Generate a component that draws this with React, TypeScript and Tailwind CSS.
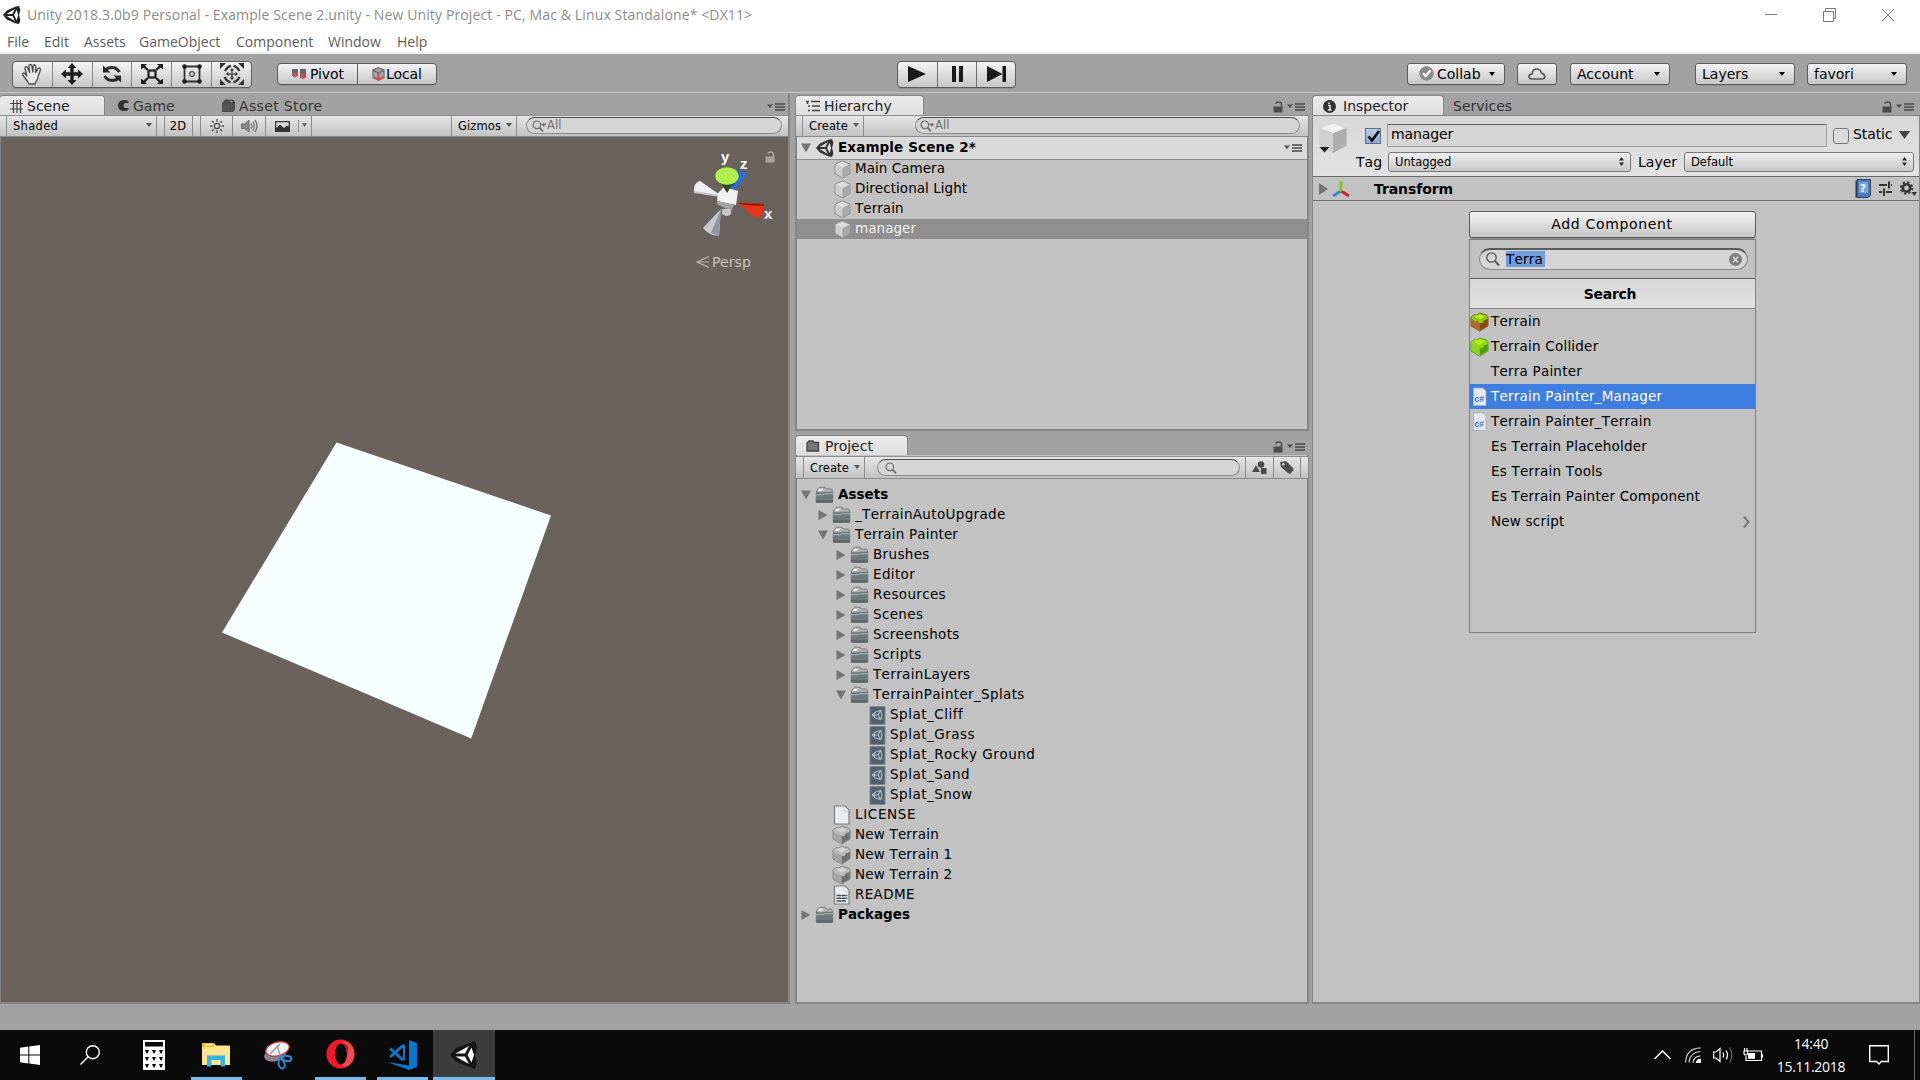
import React from "react";

type Kids = { children?: React.ReactNode };

/* ---------- small glyphs ---------- */

function Caret({ className = "text-[#555]", w = 6 }: { className?: string; w?: number }) {
  return (
    <svg width={w} height={4} viewBox="0 0 6 4" className={"shrink-0 " + className}>
      <path d="M0 0H6L3 4Z" fill="currentColor" />
    </svg>
  );
}

function UnityLogo({ size = 18, dark = "#222", light = "#fff" }: { size?: number; dark?: string; light?: string }) {
  return (
    <svg width={size} height={size} viewBox="0 0 28 28" className="shrink-0">
      <path d="M0 14 L6 7 L19 1 L25 0 L27 6 L25 14 L27 22 L25 28 L19 27 L6 21Z" fill={dark} />
      <path d="M5.5 12.300 L18.500 4.500 L14.700 12.300Z M5.500 15.700 H14.700 L18.500 23.500Z M21.300 6 L23.500 14 L21.300 22 L17.200 14Z" fill={light} />
    </svg>
  );
}

function Cube() {
  return (
    <svg width="19" height="19" viewBox="0 0 19 19" className="shrink-0">
      <path d="M9.5 1 L17 4.2 V13.5 L9.5 18 L2 13.5 V4.2Z" fill="#bdbdbd" stroke="#8d8d8d" strokeWidth="1" />
      <path d="M9.5 1.6 L16.4 4.5 L9.5 8 L2.6 4.5Z" fill="#dcdcdc" />
      <path d="M2.6 4.8 L9.5 8.2 V17.2 L2.6 13.2Z" fill="#cfcfcf" />
      <path d="M16.4 4.8 L9.5 8.2 V17.2 L16.4 13.2Z" fill="#a9a9a9" />
    </svg>
  );
}

function Block({ top, top2, left, right, edge }: { top: string; top2: string; left: string; right: string; edge: string }) {
  return (
    <svg width="19" height="20" viewBox="0 0 19 20" className="shrink-0">
      <path d="M1 5 L4.5 2.6 L6.5 3 L10 1 L13 2.2 L15 2.2 L18 4.4 V14 L9.8 19 L1 14Z" fill={left} stroke={edge} strokeWidth="1" />
      <path d="M1.5 5.3 L9.6 9.5 V18.4 L1.5 13.7Z" fill={left} />
      <path d="M17.6 5 L9.8 9.5 V18.4 L17.6 13.7Z" fill={right} />
      <path d="M1.3 5 L4.5 3 L6.5 3.6 L10 1.5 L12.6 2.9 L15 2.7 L17.7 4.8 V7 L14 8.2 L12.5 11 L9.7 11.2 L7.5 9 L5 9.4 L1.5 6.5Z" fill={top2} />
      <path d="M4 4.8 L9.8 2.2 L14.8 4.4 L9.8 7.6Z" fill={top} />
    </svg>
  );
}

const GrayBlock = () => <Block top="#d2d2d2" top2="#bababa" left="#a5a5a5" right="#6e6e6e" edge="#858585" />;

function Folder() {
  return (
    <svg width="19" height="18" viewBox="0 0 19 18" className="shrink-0">
      <path d="M1.5 5 L2.5 3.2 L3.5 2.7 L4.5 1.2 H10 L11 3 H16 Q17.3 3 17.3 5 V7 H1.5Z" fill="#b3b3b3" stroke="#7d7d7d" />
      <path d="M4 2.8 H8.6 L6 5 H3Z" fill="#f2f2f2" />
      <path d="M.8 6.5 H8 L9 5.8 H18.2 V15.5 Q18.2 16.8 17 16.8 H2 Q.8 16.8 .8 15.5Z" fill="#6d797b" />
      <path d="M1 8.7 H8 L9.5 7.8 H18" stroke="#a9b9ba" fill="none" />
      <path d="M1 14.5 H18 V15.5 Q18 16.5 17 16.5 H2 Q1 16.5 1 15.5Z" fill="#566062" />
    </svg>
  );
}

function Splat() {
  return (
    <svg width="19" height="19" viewBox="0 0 19 19" className="shrink-0">
      <rect x="3" y=".5" width="15" height="18" rx=".8" fill="#4f626b" stroke="#7f8a8f" />
      <path d="M5.500 9 L8.500 6 L13.800 4.300 L15 9 L13.800 13.700 L8.500 12Z M15 9 L13.800 4.300 M5.500 9 H11 L13.800 4.300 M11 9 L13.800 13.700" fill="none" stroke="#a9bac4" strokeWidth="1.150" strokeLinejoin="round" />
      <path d="M5 9 L8 6.500 V11.500Z" fill="#a9bac4" />
    </svg>
  );
}

function Page({ lines }: { lines?: boolean }) {
  return (
    <svg width="19" height="20" viewBox="0 0 19 20" className="shrink-0">
      <path d="M2.5 1 H13 L17 5 V19 H2.5Z" fill="#e9edf0" stroke="#7b7f82" strokeWidth="1.2" />
      <path d="M12 1.500 V6 H16.600" fill="#fff" stroke="#b4bbbf" strokeWidth=".8" />
      {lines && <path d="M4.500 10.500 H15.500 M4.500 13.300 H15.500 M4.500 16 H14" stroke="#3e4a52" strokeWidth="1.500" strokeDasharray="4.500 .4" />}
    </svg>
  );
}

function CsFile() {
  return (
    <svg width="19" height="20" viewBox="0 0 19 20" className="shrink-0">
      <path d="M3.500 1 H13 L16 4 V18.500 H3.500Z" fill="#e4e9ef" stroke="#a6adb4" strokeWidth=".8" />
      <text x="4.600" y="14.500" fontSize="8.500" fontWeight="bold" fontFamily="Liberation Sans, sans-serif" fill="#3f6fc4">c#</text>
    </svg>
  );
}

function Lock({ color = "#4c4c4c" }: { color?: string }) {
  return (
    <svg width="11" height="12" viewBox="0 0 11 12" className="shrink-0">
      <rect x=".5" y="5.5" width="9" height="6" fill={color} />
      <path d="M3 3 V2.2 Q3 1 5.5 1 Q8.5 1 8.5 3 V6" fill="none" stroke={color} strokeWidth="1.4" />
    </svg>
  );
}

function PaneMenu() {
  return (
    <svg width="18" height="8" viewBox="0 0 18 8" className="shrink-0">
      <path d="M0 1.5H6L3 5Z" fill="#4a4a4a" />
      <path d="M8 1H18M8 4H18M8 7H18" stroke="#4a4a4a" strokeWidth="1.3" />
    </svg>
  );
}

function Magnifier({ arrow }: { arrow?: boolean }) {
  return (
    <svg width={arrow ? 15 : 12} height="12" viewBox={arrow ? "0 0 15 12" : "0 0 12 12"} className="shrink-0" fill="none" stroke="#6d6d6d">
      <circle cx="4.8" cy="4.8" r="3.8" strokeWidth="1.2" />
      <path d="M7.5 7.7 L11 11.3" strokeWidth="1.7" />
      {arrow && <path d="M9 3.5H14.6L11.8 7Z" fill="#6d6d6d" stroke="none" />}
    </svg>
  );
}

/* ---------- shared chrome ---------- */

function Tab({ children, className = "" }: Kids & { className?: string }) {
  return (
    <div
      className={
        "flex h-[20px] items-center rounded-t-[4px] border border-b-0 border-[#858585] bg-linear-to-b from-[#ececec] to-[#dedede] pt-px text-[14px] text-[#222] " +
        className
      }
    >
      {children}
    </div>
  );
}

function Bar({ children, className = "" }: Kids & { className?: string }) {
  return (
    <div className={"flex h-[22px] shrink-0 items-stretch border-y border-t-[#8e8e8e] border-b-[#8a8a8a] bg-linear-to-b from-[#e6e6e6] to-[#c2c2c2] text-[11.5px] tracking-[0.1px] text-black " + className}>
      {children}
    </div>
  );
}

const Sep = ({ className = "" }: { className?: string }) => <div className={"w-px shrink-0 bg-[#8c8c8c] " + className} />;

function SearchBox({ children, className = "" }: Kids & { className?: string }) {
  return (
    <div className={"flex h-[17px] items-center rounded-full border border-[#8a8a8a] border-t-[#4d4d4d] bg-[#d5d5d5] text-[11.5px] text-[#707070] " + className}>
      {children}
    </div>
  );
}

const btn = "flex items-center border border-[#5c5c5c] bg-linear-to-b from-[#f4f4f4] to-[#c6c6c6] text-[14px] text-black shadow-[0_1px_0_#8f8f8f] ";

/* ---------- title + menu ---------- */

const menus = [
  ["File", "w-[37px]"],
  ["Edit", "w-[40px]"],
  ["Assets", "w-[55px]"],
  ["GameObject", "w-[97px]"],
  ["Component", "w-[92px]"],
  ["Window", "w-[69px]"],
  ["Help", "w-[60px]"],
];

function TitleBar() {
  return (
    <header className="h-[54px] shrink-0 border-b-2 border-[#efefef] bg-white font-['Open_Sans',sans-serif]">
      <div className="flex h-[29px] items-center pl-[3px]">
        <UnityLogo size={18} />
        <span className="ml-[6px] text-[14px] tracking-[0.125px] text-[#8c8c8c]">
          Unity 2018.3.0b9 Personal - Example Scene 2.unity - New Unity Project - PC, Mac &amp; Linux Standalone* &lt;DX11&gt;
        </span>
        <svg width="132" height="14" viewBox="0 0 132 14" className="mr-[24px] ml-auto" fill="none" stroke="#7c7c7c">
          <path d="M1 6.5H13" />
          <path d="M59.5 3.5H69.5V13.5H59.5ZM61.5 3.5V.5H71.5V10.5H69.5" />
          <path d="M118 1L130 13M130 1L118 13" />
        </svg>
      </div>
      <nav className="flex h-[25px] items-center pl-[7px] text-[14px] text-[#5c5c5c]">
        {menus.map(([m, w]) => (
          <span key={m} className={w + " shrink-0"}>{m}</span>
        ))}
      </nav>
    </header>
  );
}

/* ---------- main toolbar ---------- */

const toolIcons = [
  <svg key="hand" width="24" height="24" viewBox="0 0 24 24" fill="#e8e8e8" stroke="#4a4a4a" strokeWidth="1.3" strokeLinejoin="round">
    <path d="M8 20 L3 13.5 Q2 11.5 3.5 11 Q5 10.8 7 14 L5 7 Q4.6 5 6 4.6 Q7.2 4.5 7.8 6.2 L9.6 10.5 L8.8 4 Q8.8 2.4 10.2 2.3 Q11.5 2.3 11.8 4 L12.8 10 L13.2 4 Q13.6 2.6 14.8 2.8 Q16 3.2 15.8 4.8 L15.8 10.5 L18 6.6 Q18.9 5.6 20 6.2 Q21 7 20.3 8.3 L18.6 13 Q17.8 17.5 16 19.5 L15 22 H9Z" />
  </svg>,
  <svg key="move" width="22" height="22" viewBox="0 0 22 22" fill="#1d1d1d">
    <path d="M11 0 L15.5 5 H12.7 V9.3 H17 V6.5 L22 11 L17 15.5 V12.7 H12.7 V17 H15.5 L11 22 L6.5 17 H9.3 V12.7 H5 V15.5 L0 11 L5 6.5 V9.3 H9.3 V5 H6.5Z" />
  </svg>,
  <svg key="rot" width="20" height="20" viewBox="0 0 20 20">
    <path d="M3.500 5.500 Q6 3.500 10 3.500 Q14.500 3.500 17.500 8 M16.500 14.500 Q14 16.500 10 16.500 Q5.500 16.500 2.500 12" fill="none" stroke="#2a2a2a" strokeWidth="3" />
    <path d="M1 1.500 V8.500 H8.500Z M19 18.500 V11.500 H11.500Z" fill="#2a2a2a" />
  </svg>,
  <svg key="scale" width="22" height="20" viewBox="0 0 22 20">
    <rect x="7.5" y="6.5" width="7" height="7" fill="none" stroke="#1d1d1d" strokeWidth="2.2" />
    <path d="M0 0H6L4.2 1.8L7.5 5.2L5.8 6.4L2.4 3.6L0 5.5ZM22 0H16L17.8 1.8L14.5 5.2L16.2 6.4L19.6 3.6L22 5.5ZM0 20H6L4.2 18.2L7.5 14.8L5.8 13.6L2.4 16.4L0 14.5ZM22 20H16L17.8 18.2L14.5 14.8L16.2 13.6L19.6 16.4L22 14.5Z" fill="#1d1d1d" />
  </svg>,
  <svg key="rect" width="20" height="20" viewBox="0 0 20 20">
    <path d="M2.5 2.5H17.5V17.5H2.5Z" fill="none" stroke="#333" strokeWidth="1.8" />
    <g fill="#1d1d1d"><circle cx="2.5" cy="2.5" r="2.3" /><circle cx="17.5" cy="2.5" r="2.3" /><circle cx="2.5" cy="17.5" r="2.3" /><circle cx="17.5" cy="17.5" r="2.3" /></g>
    <circle cx="10" cy="10" r="2.3" fill="none" stroke="#444" strokeWidth="1.2" />
  </svg>,
  <svg key="all" width="24" height="22" viewBox="0 0 24 22">
    <path d="M5 8 Q7 4 11 2.8 M13.5 2.8 Q17.5 4 19.5 8 M19.5 14 Q17.5 18 13.5 19.4 M10.5 19.4 Q6.5 18 4.5 14" fill="none" stroke="#333" strokeWidth="2.2" />
    <path d="M0 0H6L0 6Z M24 0H18L24 6Z M0 22H6L0 16Z M24 22H18L24 16Z" fill="#333" />
    <path d="M12 5 L14.3 7.6 H12.6 V10.4 H15.4 V8.7 L18 11 L15.4 13.3 V11.6 H12.6 V14.4 H14.3 L12 17 L9.7 14.4 H11.4 V11.6 H8.6 V13.3 L6 11 L8.6 8.7 V10.4 H11.4 V7.6 H9.7Z" fill="#333" />
  </svg>,
];

function DropBtn({ label, className }: { label: string; className: string }) {
  return (
    <div className={btn + "h-[22px] justify-between rounded-[3px] pr-[9px] pl-[6px] " + className}>
      <span>{label}</span>
      <Caret className="text-black" w={6} />
    </div>
  );
}

function MainToolbar() {
  return (
    <div className="flex h-[39px] shrink-0 items-center border-b border-[#c4c4c4] pl-[12px]">
      <div className={btn + "mt-[2px] h-[27px] w-[240px] rounded-[4px]"}>
        {toolIcons.map((ic, i) => (
          <div key={i} className={"flex h-full flex-1 items-center justify-center " + (i ? "border-l border-[#858585]" : "")}>
            {ic}
          </div>
        ))}
      </div>
      <div className={btn + "mt-[1px] ml-[25px] h-[22px] w-[160px] rounded-[4px] tracking-[-0.1px]"}>
        <div className="flex h-full w-[80px] items-center gap-[4px] border-r border-[#5c5c5c] pl-[14px]">
          <svg width="14" height="12" viewBox="0 0 14 12">
            <rect x="0" y="1" width="6" height="7" fill="#666" /><rect x="8" y="1" width="6" height="9" fill="#666" />
            <circle cx="3" cy="7" r="2.4" fill="#e0455a" /><circle cx="11" cy="8.5" r="2.4" fill="#e0455a" />
          </svg>
          Pivot
        </div>
        <div className="flex items-center gap-[1px] pl-[14px]">
          <svg width="13" height="14" viewBox="0 0 13 14">
            <path d="M6.5 .8 L12 3 V10.5 L6.5 13.2 L1 10.5 V3Z" fill="#a8a8a8" stroke="#777" strokeWidth="1.4" />
            <path d="M6.5 6 V11 M1 3.2 L6.5 6 L12 3.2" stroke="#666" strokeWidth="1.4" fill="none" />
            <path d="M1.5 10 L6.5 12.5 L11.5 10 M6.5 7V12" stroke="#d9455a" strokeWidth="1.8" fill="none" />
          </svg>
          Local
        </div>
      </div>
      <div className={btn + "mt-[2px] ml-[460px] h-[27px] w-[119px] rounded-[4px]"}>
        <div className="flex h-full w-[39px] items-center justify-center pr-[2px]">
          <svg width="18" height="16" viewBox="0 0 18 16"><path d="M0 0L18 8L0 16Z" fill="#1a1a1a" /></svg>
        </div>
        <div className="flex h-full w-[40px] items-center justify-center border-x border-[#707070]">
          <svg width="11" height="16" viewBox="0 0 11 16"><path d="M0 0H4V16H0ZM7 0H11V16H7Z" fill="#1a1a1a" /></svg>
        </div>
        <div className="flex h-full flex-1 items-center justify-center">
          <svg width="19" height="16" viewBox="0 0 19 16"><path d="M0 0L15.500 8L0 16ZM15.500 0H19V16H15.500Z" fill="#1a1a1a" /></svg>
        </div>
      </div>
      <div className="mt-[1px] ml-auto flex pr-[13px]">
        <div className={btn + "h-[22px] w-[98px] rounded-[3px] pl-[11px]"}>
          <svg width="15" height="15" viewBox="0 0 15 15" className="mr-[3px]">
            <circle cx="7.5" cy="7.5" r="7.2" fill="#8a8a8a" /><path d="M4 7.2L6.8 10L11.5 4.2" stroke="#fff" strokeWidth="2.2" fill="none" />
          </svg>
          Collab
          <Caret className="ml-auto mr-[9px] text-black" />
        </div>
        <div className={btn + "ml-[12px] h-[22px] w-[40px] justify-center rounded-[3px]"}>
          <svg width="18" height="12" viewBox="0 0 18 12"><path d="M4 11 Q1 11 1 8.5 Q1.2 6 4 6 Q4.500 3 6 1.500 Q8 .5 10.500 1.300 Q13 2.500 13.400 5 Q16.800 6.300 16.800 8.500 Q16.800 11 14 11Z" fill="none" stroke="#555" strokeWidth="1.6" /></svg>
        </div>
        <DropBtn label="Account" className="ml-[13px] w-[100px]" />
        <DropBtn label="Layers" className="ml-[25px] w-[100px]" />
        <DropBtn label="favori" className="ml-[12px] w-[100px]" />
      </div>
    </div>
  );
}

/* ---------- scene ---------- */

function Gizmo() {
  return (
    <svg width="120" height="120" viewBox="0 0 120 120" className="absolute top-[4px] right-[4px] font-['Liberation_Sans',sans-serif]">
      <g transform="translate(-14,-14)">
        <path d="M50 54 Q43 56 44 66 L70 70 L69 67Z" fill="#c5c5ca" />
        <path d="M50 54 Q44 56 44 64 L69 68Z" fill="#f0f0f4" />
        <path d="M88 43 Q97 43 95 50 L84 64 L80 60Z" fill="#2f6be0" />
        <path d="M88 43 Q91 46 84 58 L80 60Z" fill="#1d48b0" />
        <path d="M68 66 L74 60 L88 64 L86 78 L67 74Z" fill="#f2f2f2" />
        <path d="M67 74 L84 78 L81 84 L67 77Z" fill="#a5a5a8" />
        <path d="M72 82 H81 V87 Q77 91 72 87Z" fill="#c6c6ca" />
        <path d="M71 82 L53 101 Q58 108 69 109Z" fill="#c4c8d0" />
        <path d="M71 82 L61 106 L69 109Z" fill="#9296a0" />
        <path d="M87 76 L114 77 Q115 88 107 92Z" fill="#e8341a" />
        <path d="M87 76 L114 77 V79 L95 78Z" fill="#9b1606" />
        <path d="M69 53 L77 66 L85 53Z" fill="#2c4a12" />
        <ellipse cx="77" cy="49" rx="11.700" ry="8.800" fill="#aff04e" />
      </g>
      <g fill="#fff" fontSize="15" fontWeight="bold">
        <text x="57" y="21">y</text>
        <text x="76" y="28">z</text>
        <text x="100" y="78">x</text>
      </g>
    </svg>
  );
}

function ScenePane() {
  return (
    <section className="flex w-[790px] shrink-0 flex-col border-r-2 border-[#858585]">
      <div className="mt-[2px] flex h-[20px] items-center text-[14px] text-[#333]">
        <Tab className="w-[105px] gap-[4px] border-l-0 pl-[10px]">
          <svg width="13" height="13" viewBox="0 0 13 13"><path d="M3.500 0V13M7 0V13M10.500 0V13M0 3.500H13M0 9H13" stroke="#444" strokeWidth="1.200" /></svg>
          Scene
        </Tab>
        <svg width="11" height="11" viewBox="0 0 11 11" className="mr-[4px] ml-[13px]"><path d="M10.500 3H7.500Q5.500 3 5.500 5.500Q5.500 8 7.500 8H10.500V10L7 11Q0 11 0 5.500Q0 0 7 0L10.500 1Z" fill="#333" /></svg>
        <span className="w-[41px] pt-[2px]">Game</span>
        <svg width="13" height="13" viewBox="0 0 13 13" className="mr-[4px] ml-[48px]"><path d="M0 4H9V13H0ZM10 3H12.500V11L10 13ZM2 4V2.500Q2 1 4 1H6Q8 1 8 2.500V4M8 1H10Q12 1 12 3" fill="#555" stroke="#444" /></svg>
        <span className="pt-[2px] tracking-[0.35px]">Asset Store</span>
        <div className="mt-[3px] mr-[3px] ml-auto flex"><PaneMenu /></div>
      </div>
      <Bar>
        <Sep className="ml-[6px]" />
        <div className="flex w-[149px] items-center justify-between pt-[2px] pr-[4px] pl-[6px] tracking-[0.3px]">Shaded<Caret w={6} className="-mt-[4px] text-[#555]" /></div>
        <Sep /><Sep className="ml-[7px]" />
        <div className="flex w-[27px] items-center justify-center pt-[2px] pr-px">2D</div>
        <Sep /><Sep className="ml-[7px]" />
        <div className="flex w-[31px] items-center justify-center">
          <svg width="14" height="14" viewBox="0 0 14 14" fill="none" stroke="#4a4a4a"><circle cx="7" cy="7" r="2.700" strokeWidth="1.200" /><path d="M7 0V2.500M7 11.500V14M0 7H2.500M11.500 7H14M2 2L3.700 3.700M10.300 10.300L12 12M12 2L10.300 3.700M2 12L3.700 10.300" strokeWidth="1.400" /></svg>
        </div>
        <Sep />
        <div className="flex w-[32px] items-center justify-center">
          <svg width="17" height="14" viewBox="0 0 17 14" fill="none" stroke="#6a6a6a"><path d="M.5 5H3.500L8 1V13L3.500 9.500H.5Z" fill="#8a8a8a" /><path d="M10 4.500Q11.500 7 10 9.500M12 2.500Q14.500 7 12 11.500M14 .8Q18 7 14 13.200" strokeWidth="1.200" /></svg>
        </div>
        <Sep />
        <div className="flex w-[32px] items-center pl-[9px]">
          <svg width="15" height="11" viewBox="0 0 15 11"><path d="M0 0H15V11H0Z" fill="#333" /><path d="M1.300 1.300H13.700V5.500L12 4.500L9 7L5 3.500L1.300 7Z" fill="#d8d8d8" /></svg>
        </div>
        <Sep className="my-[4px]" />
        <div className="flex w-[12px] items-center pl-[3px]"><Caret w={5} className="-mt-[3px] text-[#555]" /></div>
        <Sep /><Sep className="ml-auto" />
        <div className="flex w-[64px] items-center justify-between pt-[2px] pr-[4px] pl-[6px]">Gizmos<Caret w={6} className="-mt-[4px] text-[#555]" /></div>
        <Sep />
        <SearchBox className="mt-[1px] mr-[6px] ml-[9px] w-[256px] pl-[5px]"><Magnifier arrow />All</SearchBox>
      </Bar>
      <div className="relative flex-1 overflow-hidden border-b-2 border-l border-[#858585] bg-[#6a625c]">
        <svg width="780" height="620" viewBox="0 0 780 620" className="block">
          <polygon points="335.500,305.500 550,378.500 470.200,601.500 221,495.500" fill="#f6fffe" />
        </svg>
        <Gizmo />
        <div className="absolute top-[14px] right-[12px] flex"><Lock color="#aaa69f" /></div>
        <div className="absolute top-[118px] right-[37px] flex items-center gap-[3px] text-[14px] tracking-[0.1px] text-[#c6c3bf]">
          <svg width="13" height="12" viewBox="0 0 13 12" fill="none" stroke="#b5b1ac" strokeWidth="1.200"><path d="M13 .5L1 6L13 11.500M1 6H13" /></svg>
          Persp
        </div>
      </div>
    </section>
  );
}

/* ---------- tree rows ---------- */

const indents = ["pl-[5px]", "pl-[22px]", "pl-[40px]", "pl-[57px]"];

type RowProps = {
  level: number;
  open?: boolean;
  icon: React.ReactNode;
  label: string;
  bold?: boolean;
  selected?: boolean;
  spacing?: string;
};

function Row({ level, open, icon, label, bold, selected, spacing = "ml-[4px] tracking-[0.35px]" }: RowProps) {
  return (
    <div className={"flex h-[20px] items-center text-[13.5px] " + indents[level] + (selected ? " bg-[#8f8f8f] text-[#f0f0f0]" : " text-black") + (bold ? " font-bold" : "")}>
      <svg width="10" height="10" viewBox="0 0 10 10" className="mr-[4px] shrink-0">
        {open !== undefined && <path d={open ? "M0 .5H10L5 9.500Z" : "M.5 0L9.500 5L.5 10Z"} fill="#757575" />}
      </svg>
      {icon}
      <span className={"whitespace-nowrap [font-kerning:none] " + spacing}>{label}</span>
    </div>
  );
}

const folders = ["Brushes", "Editor", "Resources", "Scenes", "Screenshots", "Scripts", "TerrainLayers"];
const splats = ["Splat_Cliff", "Splat_Grass", "Splat_Rocky Ground", "Splat_Sand", "Splat_Snow"];
const tight = "ml-[4px] tracking-[0.18px]";
const wide = "ml-[4px] tracking-[0.5px]";

function PaneTabs({ icon, label, width }: { icon: React.ReactNode; label: string; width: string }) {
  return (
    <div className="flex h-[20px] shrink-0 items-center">
      <Tab className={"pl-[10px] " + width}>{icon}{label}</Tab>
      <div className="mt-[3px] mr-[4px] ml-auto flex items-center gap-[3px]"><Lock /><PaneMenu /></div>
    </div>
  );
}

function MiddleColumn() {
  return (
    <div className="ml-[5px] flex w-[514px] shrink-0 flex-col">
      <section className="mt-[2px] flex h-[336px] shrink-0 flex-col">
        <PaneTabs
          width="w-[129px] gap-[4px]"
          label="Hierarchy"
          icon={<svg width="14" height="12" viewBox="0 0 14 12"><path d="M0 1.500H3M5 1.500H14M2 6H4M6 6H14M2 10.500H4M6 10.500H14M1.500 2V4" stroke="#444" strokeWidth="1.500" /></svg>}
        />
        <div className="flex flex-1 flex-col border-x-2 border-b-2 border-[#858585] bg-[#c2c2c2]">
          <Bar className="-mx-px">
            <Sep className="ml-[6px]" />
            <div className="flex w-[60px] items-center justify-between pt-[2px] pr-[4px] pl-[6px]">Create<Caret w={6} className="-mt-[4px] text-[#555]" /></div>
            <Sep />
            <SearchBox className="mt-[1px] mr-[8px] ml-auto w-[385px] pl-[4px]"><Magnifier arrow />All</SearchBox>
          </Bar>
          <div className="flex h-[23px] items-center justify-between border-b border-[#8e8e8e] bg-[#dadada] pr-[5px]">
            <div className="-ml-px"><Row level={0} open bold spacing="ml-[4px] tracking-[0.12px]" icon={<span className="flex w-[19px] justify-center"><UnityLogo size={18} dark="#333" light="#dadada" /></span>} label="Example Scene 2*" /></div>
            <PaneMenu />
          </div>
          <div className="-mt-px">
            {["Main Camera", "Directional Light", "Terrain", "manager"].map((n) => (
              <Row key={n} level={1} icon={<Cube />} label={n} selected={n === "manager"} spacing="ml-[3px] tracking-[0.05px]" />
            ))}
          </div>
        </div>
      </section>
      <section className="mt-[4px] flex flex-1 flex-col">
        <PaneTabs
          width="w-[113px] gap-[5px]"
          label="Project"
          icon={<svg width="14" height="12" viewBox="0 0 14 12"><path d="M1 11V3L3 1H7L8 2.500H12.500V11Z" fill="#777" stroke="#444" strokeWidth="1.300" /></svg>}
        />
        <div className="flex flex-1 flex-col border-x-2 border-b-2 border-[#858585] bg-[#c2c2c2]">
          <Bar className="-mx-px mt-px h-[23px]">
            <Sep className="ml-[7px]" />
            <div className="flex w-[60px] items-center justify-between pt-[2px] pr-[4px] pl-[6px]">Create<Caret w={6} className="-mt-[4px] text-[#555]" /></div>
            <Sep />
            <SearchBox className="mt-[2px] mr-[5px] ml-auto w-[363px] pl-[7px]"><Magnifier /></SearchBox>
            <Sep />
            <div className="flex w-[27px] items-center justify-center">
              <svg width="15" height="13" viewBox="0 0 15 13" fill="#4d4d4d"><path d="M0 11L4 4L8 11Z" /><circle cx="9" cy="3.500" r="3.300" /><rect x="9" y="7" width="5.500" height="6" /></svg>
            </div>
            <Sep />
            <div className="flex w-[26px] items-center justify-center">
              <svg width="14" height="14" viewBox="0 0 14 14"><path d="M0 1L6 0L13 7L13.500 9.500L10 13L8 12L1 6Z" fill="#4d4d4d" /><circle cx="3.300" cy="3.200" r="1.300" fill="#d5d5d5" /></svg>
            </div>
            <Sep className="mr-[7px]" />
          </Bar>
          <div className="-ml-px mt-[6px]">
            <Row level={0} open bold icon={<Folder />} label="Assets" spacing="ml-[4px] tracking-[0px]" />
            <Row level={1} open={false} icon={<Folder />} label="_TerrainAutoUpgrade" />
            <Row level={1} open icon={<Folder />} label="Terrain Painter" spacing={tight} />
            {folders.map((f) => <Row key={f} level={2} open={false} icon={<Folder />} label={f} />)}
            <Row level={2} open icon={<Folder />} label="TerrainPainter_Splats" />
            {splats.map((s) => <Row key={s} level={3} icon={<Splat />} label={s} spacing={wide} />)}
            <Row level={1} icon={<Page />} label="LICENSE" spacing="ml-[4px] tracking-[0.65px]" />
            {["New Terrain", "New Terrain 1", "New Terrain 2"].map((n) => <Row key={n} level={1} icon={<GrayBlock />} label={n} spacing={tight} />)}
            <Row level={1} icon={<Page lines />} label="README" />
            <Row level={0} open={false} bold icon={<Folder />} label="Packages" spacing="ml-[4px] tracking-[0px]" />
          </div>
        </div>
      </section>
    </div>
  );
}

/* ---------- inspector ---------- */

function Popup({ label, className }: { label: string; className: string }) {
  return (
    <div className={"flex h-[20px] shrink-0 items-center justify-between rounded-[3px] border border-[#777] bg-linear-to-b from-[#f0f0f0] to-[#c8c8c8] px-[6px] pt-[2px] text-[11.5px] " + className}>
      {label}
      <svg width="5" height="9" viewBox="0 0 5 9" className="-mt-[3px]"><path d="M2.500 0L5 3.500H0ZM0 5.500H5L2.500 9Z" fill="#222" /></svg>
    </div>
  );
}

const results: { label: string; icon?: React.ReactNode; active?: boolean; more?: boolean }[] = [
  { label: "Terrain", icon: <Block top="#b6f216" top2="#86cc10" left="#b56a2a" right="#8a4712" edge="#7c6a20" /> },
  { label: "Terrain Collider", icon: <Block top="#b6f216" top2="#8fdc12" left="#8ed31c" right="#559a0c" edge="#5d9a20" /> },
  { label: "Terra Painter" },
  { label: "Terrain Painter_Manager", icon: <CsFile />, active: true },
  { label: "Terrain Painter_Terrain", icon: <CsFile /> },
  { label: "Es Terrain Placeholder" },
  { label: "Es Terrain Tools" },
  { label: "Es Terrain Painter Component" },
  { label: "New script", more: true },
];

function AddComponent() {
  return (
    <div className="mt-[10px] ml-[156px] w-[287px]">
      <div className={btn + "h-[27px] justify-center rounded-[3px] pr-[1px] pb-px tracking-[0.65px]"}>Add Component</div>
      <div className="mt-[1px] h-[394px] border border-[#808080]">
        <div className="flex h-[39px] items-start border-b border-[#5e5e5e] pt-[8px] pl-[9px]">
          <div className="flex h-[22px] w-[269px] items-center rounded-full border border-[#8a8a8a] border-t-2 border-t-[#5a5a5a] bg-[#d5d5d5] pr-[5px] pb-px pl-[6px] text-[13.5px] text-black">
            <svg width="14" height="14" viewBox="0 0 14 14" fill="none" stroke="#555" className="mr-[6px]"><circle cx="5.500" cy="5.500" r="4.700" strokeWidth="1.300" /><path d="M9 9L13 13.500" strokeWidth="1.900" /></svg>
            <span className="bg-[#6f9ddd] pr-[2px] leading-[16px] tracking-[0.2px] [font-kerning:none]">Terra</span>
            <svg width="13" height="13" viewBox="0 0 13 13" className="ml-auto"><circle cx="6.500" cy="6.500" r="6.500" fill="#7d7d7d" /><path d="M3.800 3.800L9.200 9.200M9.200 3.800L3.800 9.200" stroke="#e0e0e0" strokeWidth="1.500" /></svg>
          </div>
        </div>
        <div className="flex h-[30px] items-center justify-center border-b border-[#8a8a8a] bg-linear-to-b from-[#d6d6d6] to-[#e2e2e2] pr-[5px] text-[14px] font-bold tracking-[-0.3px]">Search</div>
        {results.map((r) => (
          <div key={r.label} className={"flex h-[25px] items-center pt-px text-[13.5px] " + (r.active ? "bg-[#3e7ee0] text-white" : "text-black")}>
            <span className="flex w-[21px] shrink-0">{r.icon}</span>
            <span className="flex-1 tracking-[0.22px] [font-kerning:none]">{r.label}</span>
            {r.more && <svg width="7" height="12" viewBox="0 0 7 12" className="mr-[5px]"><path d="M1 .5L5.500 6L1 11.500" stroke="#777" strokeWidth="2" fill="none" /></svg>}
          </div>
        ))}
      </div>
    </div>
  );
}

function Inspector() {
  return (
    <section className="mt-[2px] ml-[3px] flex flex-1 flex-col">
      <div className="flex h-[20px] items-center">
        <Tab className="w-[132px] gap-[7px] pl-[10px]">
          <svg width="13" height="13" viewBox="0 0 13 13"><circle cx="6.500" cy="6.500" r="6.500" fill="#333" /><path d="M5 5.500H7V10M4.800 10H8.500M6 2.500V4" stroke="#eee" strokeWidth="1.500" fill="none" /></svg>
          Inspector
        </Tab>
        <span className="ml-[9px] pt-[2px] text-[14px] text-[#333]">Services</span>
        <div className="mt-[3px] mr-[6px] ml-auto flex items-center gap-[3px]"><Lock /><PaneMenu /></div>
      </div>
      <div className="flex-1 border-x border-y border-b-2 border-[#858585] bg-[#c2c2c2] text-[14px] text-black">
        <div className="flex h-[61px] border-b border-[#6a6a6a] bg-linear-to-b from-[#d8d8d8] to-[#e2e2e2]">
          <svg width="30" height="34" viewBox="0 0 30 34" className="mt-[6px] ml-[5px] shrink-0">
            <path d="M15 1L28.500 6V23.500L15 31L1.500 23.500V6Z" fill="#d0d0d0" />
            <path d="M15 1L28.500 6L15 11.500L1.500 6Z" fill="#f1f1f1" stroke="#c4c4c4" strokeWidth=".6" />
            <path d="M28.500 6L15 11.500V31L28.500 23.500Z" fill="#aeaeae" />
            <path d="M1.500 25H11.500L6.500 30.500Z" fill="#222" />
          </svg>
          <div className="flex flex-1 flex-col">
            <div className="mt-[7px] flex h-[24px] items-center pl-[17px]">
              <div className="mt-[1px] h-[16px] w-[16px] border border-[#5c6f8c] bg-linear-to-b from-[#b9cbe6] to-[#8fabd6]">
                <svg width="16" height="15" viewBox="0 0 16 15"><path d="M2.500 7.500L6 11.500L13 2" stroke="#000" strokeWidth="2.600" fill="none" /></svg>
              </div>
              <div className="ml-[6px] flex h-[23px] w-[440px] items-center border border-[#a0a0a0] border-t-[#5e5e5e] bg-[#d6d6d6] pl-[3px]"><span className="-mt-[2px] tracking-[-0.1px]">manager</span></div>
              <div className="mt-[1px] ml-[6px] h-[16px] w-[16px] rounded-[3px] border border-[#777] bg-[#dcdcdc]" />
              <span className="-mt-[2px] ml-[4px] tracking-[-0.1px]">Static</span>
              <svg width="11" height="8" viewBox="0 0 11 8" className="ml-[7px]"><path d="M0 0H11L5.500 8Z" fill="#444" /></svg>
            </div>
            <div className="mt-[5px] flex h-[20px] items-center pl-[8px]">
              <span className="w-[32px] shrink-0 [font-kerning:none]">Tag</span>
              <Popup label="Untagged" className="w-[243px]" />
              <span className="w-[53px] shrink-0 pl-[7px]">Layer</span>
              <Popup label="Default" className="w-[230px]" />
            </div>
          </div>
        </div>
        <div className="flex h-[24px] items-center border-b border-[#707070] pr-[2px] pl-[6px]">
          <svg width="9" height="12" viewBox="0 0 9 12"><path d="M0 0L9 6L0 12Z" fill="#757575" /></svg>
          <svg width="18" height="18" viewBox="0 0 18 18" className="ml-[4px]" strokeWidth="2.800" fill="none">
            <path d="M9 11L1 16" stroke="#2f8fd0" /><path d="M9 11L17 16" stroke="#d0202a" /><path d="M9 11.500V1" stroke="#8ac41e" />
          </svg>
          <span className="ml-[24px] font-bold tracking-[-0.1px]">Transform</span>
          <svg width="16" height="19" viewBox="0 0 16 19" className="ml-auto"><path d="M.5 1.500H2V18.500H.5Z" fill="#23314a" /><path d="M2 .5H15.500V16.500L13 18.500H2Z" fill="#4b7cb8" stroke="#2d4468" /><path d="M4 3H13V14H4Z" fill="#7ba6d6" /><text x="5" y="12.500" fontSize="10" fontWeight="bold" fill="#fff">?</text></svg>
          <svg width="14" height="15" viewBox="0 0 14 15" className="ml-[8px]" stroke="#333" strokeWidth="2"><path d="M0 4H8M12 4H13M10 .5V7.500M0 11H3M7 11H13M5 7.500V15" /></svg>
          <svg width="17" height="16" viewBox="0 0 17 16" className="ml-[7px]"><circle cx="6.500" cy="7" r="3.700" fill="none" stroke="#333" strokeWidth="2.600" /><circle cx="6.500" cy="7" r="5.800" fill="none" stroke="#333" strokeWidth="1.800" strokeDasharray="2.300 2.255" /><path d="M11.500 11H17L14.300 15Z" fill="#333" /></svg>
        </div>
        <AddComponent />
      </div>
    </section>
  );
}

/* ---------- taskbar ---------- */

function TaskItem({ children, underline, active }: Kids & { underline?: boolean; active?: boolean }) {
  return (
    <div className={"flex h-[50px] w-[62px] flex-col items-center " + (active ? "bg-[#3c3c3c]" : "")}>
      <div className="flex flex-1 items-center">{children}</div>
      <div className={"h-[3px] " + (active ? "w-full " : "w-[51px] ") + (underline ? "bg-[#76b9ed]" : "")} />
    </div>
  );
}

function Taskbar() {
  return (
    <footer className="flex h-[50px] shrink-0 bg-[#0a0a0a] font-['Open_Sans',sans-serif]">
      <div className="flex w-[60px] items-center justify-center">
        <svg width="20" height="20" viewBox="0 0 20 20" fill="#fff"><path d="M0 2.800L8.300 1.500V9.500H0ZM9.300 1.400L20 0V9.500H9.300ZM0 10.500H8.300V18.500L0 17.300ZM9.300 10.500H20V20L9.300 18.600Z" /></svg>
      </div>
      <div className="flex w-[63px] items-center justify-center pr-[3px]">
        <svg width="20" height="20" viewBox="0 0 20 20" fill="none" stroke="#fff" strokeWidth="1.400"><circle cx="12.800" cy="7.200" r="6.500" /><path d="M8.200 11.800L.5 19.500" /></svg>
      </div>
      <TaskItem>
        <svg width="22" height="30" viewBox="0 0 22 30" className="mt-[3px]"><path d="M0 0H22V30H0Z" fill="#fff" /><path d="M2 2H20V6.500H2Z" fill="#0a0a0a" />
          <path d="M2 10H6L4.500 13.500H3.500ZM9 10H13L11.500 13.500H10.500ZM16 10H20L18.500 13.500H17.500ZM2 17H6L4.500 20.500H3.500ZM9 17H13L11.500 20.500H10.500ZM16 17H20L18.500 20.500H17.500ZM2 24H6L4.500 27.500H3.500ZM9 24H13L11.500 27.500H10.500ZM16 24H20L18.500 27.500H17.500Z" fill="#0a0a0a" /></svg>
      </TaskItem>
      <TaskItem underline>
        <svg width="28" height="24" viewBox="0 0 28 24" className="mt-[2px]"><path d="M0 1Q0 0 1 0H12L14 2.500H27Q28 2.500 28 3.500V22H0Z" fill="#fde48e" /><path d="M0 0H12V4H0Z" fill="#f6bf26" /><path d="M3 1.200H10V2.600H3Z" fill="#fff3cf" /><path d="M5 12.500H23V23.500H18.500V17H9.500V23.500H5Z" fill="#35b2e8" /></svg>
      </TaskItem>
      <TaskItem>
        <svg width="29" height="29" viewBox="0 0 29 29" className="mt-[3px]">
          <ellipse cx="11" cy="14" rx="11" ry="6.500" fill="#84868a" transform="rotate(-12 11 14)" />
          <ellipse cx="13.500" cy="8" rx="12" ry="6.800" fill="#f4f4f6" stroke="#c9363e" strokeWidth="1.400" transform="rotate(-15 13.500 8)" />
          <path d="M6 13L16 3M13 4L16.500 16" stroke="#9aa0a8" strokeWidth="1.500" fill="none" />
          <path d="M15 16Q20 14 26 15.500Q29 17 26 20Q22 21 16 16.500Q22 22 20.500 26Q18 29.500 15 25Q14 21 15.500 17" fill="none" stroke="#2788d2" strokeWidth="2" />
        </svg>
      </TaskItem>
      <TaskItem underline>
        <svg width="29" height="30" viewBox="0 0 29 30" className="mt-[1px]">
          <path fillRule="evenodd" d="M14.500 .5A14 14.500 0 0 1 14.500 29.500A14 14.500 0 0 1 14.500 .5ZM15 4.500C12 4.500 9 9 9 15C9 21 12 25.500 15 25.500C18.500 25.500 21 21 21 15C21 9 18.500 4.500 15 4.500Z" fill="#f5162c" />
          <path d="M15 4.500C18.500 4.500 21 9 21 15C21 21 18.500 25.500 15 25.500C17 28 21 28 24 25.500A14 14.500 0 0 0 24 4.500C21 2 17 2.500 15 4.500Z" fill="#f04a4f" />
          <path d="M15 4.500C18.500 4.500 21 9 21 15L22.500 9Q20 3 15 4.500Z" fill="#b31424" />
        </svg>
      </TaskItem>
      <TaskItem underline>
        <svg width="30" height="30" viewBox="0 0 30 30" className="mt-[3px]">
          <path d="M22 0L30 3V27L22 30L0 22L22 25.500Z" fill="#0878ce" />
          <path d="M3 8.500L16 20M3 17L16 5.500" stroke="#0878ce" strokeWidth="3" fill="none" /><path d="M16 4L18 5V20L16 21Z" fill="#0878ce" />
        </svg>
      </TaskItem>
      <TaskItem underline active>
        <svg width="28" height="28" viewBox="0 0 28 28" className="mt-[2px]">
          <path d="M0 14L6 7L22 1L25 0L27 6L25 14L27 22L25 28L22 27L6 21Z" fill="#151515" />
          <path d="M5.500 12.500L19 5L15 12.500ZM5.500 15.500H15L19 23ZM21.500 6.500L24 14L21.500 21.500L17.500 14Z" fill="#fff" />
        </svg>
      </TaskItem>
      <div className="ml-auto flex items-center text-white">
        <svg width="17" height="10" viewBox="0 0 17 10" fill="none" stroke="#fff" strokeWidth="1.500"><path d="M.5 9L8.500 1L16.500 9" /></svg>
        <svg width="16" height="16" viewBox="0 0 16 16" className="ml-[14px]" fill="none" stroke="#fff" strokeWidth="1.200"><path d="M.6 15.500Q1 1.500 15.500 .8M4 15.500Q4.500 5.500 15.500 4.500M8 15.500Q8.500 9.500 15.500 8.800" stroke="#c8c8c8" /><path d="M11.500 15.500Q12 12.500 15.500 12.300V15.500Z" fill="#fff" /></svg>
        <svg width="21" height="18" viewBox="0 0 21 18" className="ml-[12px]" fill="none" stroke="#fff" strokeWidth="1.200"><path d="M.6 6H3L7 2.500V15.500L3 12H.6Z" /><path d="M10 6.500Q11.500 9 10 11.500M13 4.500Q16 9 13 13.500" /><path d="M16.500 1.500Q21.500 9 16.500 16.500" stroke="#666" /></svg>
        <svg width="20" height="14" viewBox="0 0 20 14" className="ml-[9px]" fill="none" stroke="#fff" strokeWidth="1.200"><path d="M5 3H18.500V12.500H3V8M19.500 6V9.500M.5 3H5M1 3V6Q3 8 4.500 6V3M1.500 0V3M4 0V3" /><path d="M5 5H12V10.800H5Z" fill="#fff" stroke="none" /></svg>
        <div className="ml-[13px] flex w-[70px] flex-col items-center text-[14px] leading-[23px] tracking-[-0.3px]"><span>14:40</span><span>15.11.2018</span></div>
        <svg width="20" height="20" viewBox="0 0 20 20" className="ml-[23px]" fill="none" stroke="#fff" strokeWidth="1.400"><path d="M.7 .7H19.300V16.500H12.500L10 19L7.500 16.500H.7Z" /></svg>
        <div className="mr-[5px] ml-[25px] h-[50px] w-px bg-[#6a6a6a]" />
      </div>
    </footer>
  );
}

export default function App() {
  return (
    <div className="flex h-[1080px] w-[1920px] flex-col overflow-hidden bg-[#a2a2a2] font-['DejaVu_Sans',sans-serif] leading-none">
      <TitleBar />
      <MainToolbar />
      <main className="flex h-[911px] shrink-0">
        <ScenePane />
        <MiddleColumn />
        <Inspector />
      </main>
      <div className="h-[26px] shrink-0" />
      <Taskbar />
    </div>
  );
}
